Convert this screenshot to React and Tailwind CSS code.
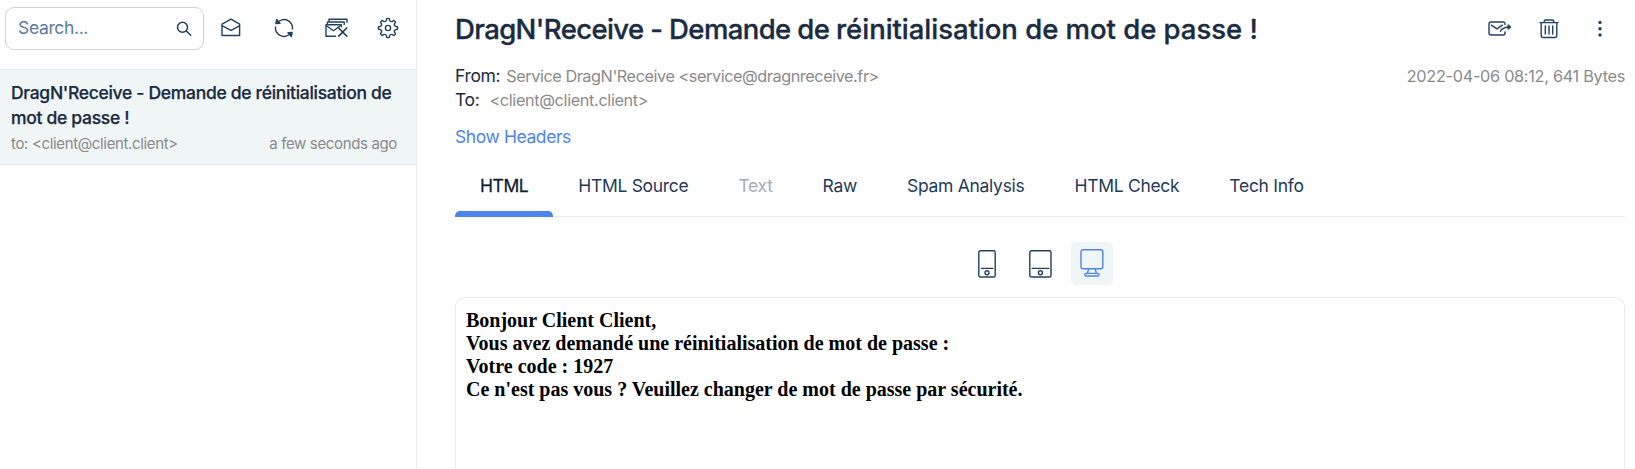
import React from "react";

const Svg = ({ w, h, className = "", children, sw = 1.3 }) => (
  <svg
    width={w}
    height={h}
    viewBox={`0 0 ${w} ${h}`}
    fill="none"
    stroke="currentColor"
    strokeWidth={sw}
    strokeLinecap="round"
    strokeLinejoin="round"
    className={"block shrink-0 " + className}
  >
    {children}
  </svg>
);

const SearchIcon = () => (
  <Svg w={16} h={16} sw={1.5}>
    <circle cx="6.5" cy="6.2" r="5" />
    <path d="M10.2 9.9 14.7 14.3" />
  </Svg>
);

const OpenMailIcon = () => (
  <Svg w={20} h={20} sw={1.4}>
    <path d="M1 6.2 10 1.2l8.6 5v11.3H1z" />
    <path d="m1.3 7.8 8.7 4.6 8.4-4.6" />
  </Svg>
);

const RefreshIcon = () => (
  <Svg w={20} h={20} sw={1.4}>
    <path d="M5.4 3A8.4 8.4 0 0 1 18.4 11" />
    <path d="M14.6 17A8.4 8.4 0 0 1 1.6 9" />
    <path d="M2.6 1.6 1.9 5.6 6 5.2zM17.4 18.4l.7-4-4.1.4z" fill="currentColor" />
  </Svg>
);

const ClearMailIcon = () => (
  <Svg w={23} h={20} sw={1.4}>
    <path d="M4 3.8V1.2h18v3M2.4 6.5V4h16.8v2.6M10.5 18.2H1V6.8h15.4v2" />
    <path d="m1.8 8 6.7 4.8 6.5-4.8" />
    <path d="m13.7 10 8 8.2M21.7 10l-8 8.2" strokeWidth="1.7" />
  </Svg>
);

const polar = (deg, r) => {
  const a = (deg * Math.PI) / 180;
  return `${(11 + r * Math.cos(a)).toFixed(2)} ${(11 + r * Math.sin(a)).toFixed(2)}`;
};

const gearPath =
  Array.from({ length: 8 }, (_, i) => {
    const a = i * 45;
    return `${i ? "L" : "M"}${polar(a - 11, 7.9)}L${polar(a - 8, 9.5)}Q${polar(a, 9.9)} ${polar(a + 8, 9.5)}L${polar(a + 11, 7.9)}Q${polar(a + 22.5, 6.3)} ${polar(a + 34, 7.9)}`;
  }).join("") + "Z";

const GearIcon = () => (
  <Svg w={22} h={22} sw={1.4}>
    <circle cx="11" cy="11" r="2.6" />
    <path d={gearPath} />
  </Svg>
);

const ForwardIcon = () => (
  <Svg w={24} h={16} sw={1.4}>
    <path d="M17 3.4V3q0-2-2-2H3Q1 1 1 3v9q0 2 2 2h12q2 0 2-2v-1" />
    <path d="m3.4 4.2 5.6 3.6 5.4-3.6" />
    <path d="M12.4 10.2C14 7.3 16 6 22 6" />
    <path d="m20.2 4 2.2 2-2.2 2z" fill="currentColor" />
  </Svg>
);

const TrashIcon = () => (
  <Svg w={20} h={20} sw={1.4}>
    <path d="M1 3.6h18M5.2 3.2V2.4q0-1.4 1.4-1.4h6.8q1.4 0 1.4 1.4v.8M2.2 3.8v12.7q0 2 2 2h11.6q2 0 2-2V3.8M6.3 7v8M10 7v8M13.7 7v8" />
  </Svg>
);

const DotsIcon = () => (
  <Svg w={6} h={18}>
    <g fill="currentColor" stroke="none">
      <circle cx="3" cy="2.4" r="1.7" />
      <circle cx="3" cy="8.8" r="1.7" />
      <circle cx="3" cy="15" r="1.7" />
    </g>
  </Svg>
);

const PhoneIcon = () => (
  <Svg w={18} h={28} sw={1.4}>
    <rect x=".8" y=".8" width="16.4" height="26.2" rx="1.6" />
    <path d="M3.4 18.4h11.4" />
    <circle cx="9" cy="22.7" r="2" />
  </Svg>
);

const TabletIcon = () => (
  <Svg w={23} h={28} sw={1.4}>
    <rect x=".8" y=".8" width="21.2" height="26.2" rx="1.6" />
    <path d="M3.2 18.4h16.6" />
    <circle cx="11.4" cy="22.7" r="2" />
  </Svg>
);

const DesktopIcon = () => (
  <Svg w={24} h={28} sw={1.4}>
    <rect x="1" y=".8" width="21.8" height="19" rx="2" />
    <path d="m8.6 20-1.2 4.4M15.2 20l1.2 4.4" />
    <rect x="4.8" y="24.4" width="14.2" height="2.6" rx="1.2" />
  </Svg>
);

const tabs = ["HTML", "HTML Source", "Text", "Raw", "Spam Analysis", "HTML Check", "Tech Info"];

function Tab({ name }) {
  const active = name === "HTML";
  const disabled = name === "Text";
  return (
    <div
      className={
        "flex flex-col justify-between px-[25px] " +
        (active
          ? "tracking-[-0.026em] text-[#101d33] "
          : disabled
            ? "text-[#a4abb5] "
            : "text-[#1f3a58] ")
      }
    >
      <span className={"leading-[22px] " + (active ? "[-webkit-text-stroke:0.3px_#101d33]" : "")}>{name}</span>
      {active && <span className="-mx-[25px] h-[6px] rounded-t-[5px] bg-[#4c83ee]" />}
    </div>
  );
}

export default function App() {
  return (
    <div className="flex h-[469px] w-[1635px] overflow-hidden bg-white font-['Inter',sans-serif] text-[17.5px] tracking-[-0.02em] text-[#1a2b42]">
      <aside className="w-[417px] shrink-0 border-r border-[#ebebeb]">
        <div className="flex h-[69px] items-start pt-[7px] pl-[5px] text-[#234060]">
          <div className="flex h-[43px] w-[199px] items-center justify-between rounded-[9px] border border-[#cfd3d8] pr-[11px] pl-[12px]">
            <span className="text-[#5b7a99]">Search...</span>
            <SearchIcon />
          </div>
          <div className="flex h-[42px] items-center pl-[17px]">
            <OpenMailIcon />
            <div className="w-[33px]" />
            <RefreshIcon />
            <div className="w-[31px]" />
            <ClearMailIcon />
            <div className="w-[29px]" />
            <GearIcon />
          </div>
        </div>
        <div className="h-[96px] border-y border-[#e6eaea] bg-[#f0f6f6] pt-[10px] pr-[19px] pl-[11px]">
          <div className="w-[400px] leading-[25px] font-medium tracking-[-0.0175em] [-webkit-text-stroke:0.25px_#1a2b42]">
            DragN'Receive - Demande de réinitialisation de
            <br />
            mot de passe !
          </div>
          <div className="flex justify-between pt-[4px] text-[15px] leading-[20px] text-[#8a8a8a]">
            <span>to: &lt;client@client.client&gt;</span>
            <span>a few seconds ago</span>
          </div>
        </div>
      </aside>

      <main className="flex w-[1208px] shrink-0 flex-col pl-[38px]">
        <div className="flex h-[58px] items-center justify-between">
          <h1 className="text-[27.5px] leading-[34px] font-medium tracking-[-0.022em] [-webkit-text-stroke:0.35px_#1a2b42]">
            DragN'Receive - Demande de{" "}
            <span className="tracking-[-0.001em]">réinitialisation de mot de passe !</span>
          </h1>
          <div className="flex items-center pr-[22px] text-[#234060]">
            <ForwardIcon />
            <div className="w-[27px]" />
            <TrashIcon />
            <div className="w-[38px]" />
            <DotsIcon />
          </div>
        </div>
        <div className="flex justify-between pt-[6px]">
          <div>
            <div className="flex h-6 items-center gap-[6px]">
              <span>From:</span>
              <span className="text-[16.25px] tracking-[-0.027em] text-[#8a8a8a]">
                Service DragN'Receive &lt;service@dragnreceive.fr&gt;
              </span>
            </div>
            <div className="flex h-6 items-center gap-[10px]">
              <span>To:</span>
              <span className="text-[16.25px] text-[#8a8a8a]">&lt;client@client.client&gt;</span>
            </div>
          </div>
          <span className="h-6 text-[16.25px] leading-6 tracking-[-0.0175em] text-[#8a8a8a]">
            2022-04-06 08:12, 641 Bytes
          </span>
        </div>
        <div className="mt-[13px] h-6 leading-6 tracking-[-0.024em] text-[#4c83ee]">Show Headers</div>
        <div className="mt-[26px] flex h-[42px] shrink-0 border-b border-[#ebebeb] tracking-[-0.017em] [&>div:first-child]:-mb-px">
          {tabs.map((t) => (
            <Tab key={t} name={t} />
          ))}
        </div>
        <div className="mt-[25px] flex h-[43px] shrink-0 items-center pl-[523px] text-[#234060]">
          <PhoneIcon className="mb-px" />
          <div className="w-[33px]" />
          <TabletIcon className="mb-px" />
          <div className="ml-[19px] flex h-[43px] w-[42px] items-center justify-center rounded-[5px] bg-[#f0f6f6] pb-px text-[#4c83ee]">
            <DesktopIcon />
          </div>
        </div>
        <div className="mt-[12px] w-[1170px] grow rounded-t-[10px] border border-b-0 border-[#ebebeb] pt-[11px] pl-[10px] font-['Liberation_Serif',serif] text-[20px] leading-[23px] font-bold tracking-normal text-black">
          <p>Bonjour Client Client,</p>
          <p>Vous avez demandé une réinitialisation de mot de passe :</p>
          <p>Votre code : 1927</p>
          <p>Ce n'est pas vous ? Veuillez changer de mot de passe par sécurité.</p>
        </div>
      </main>
    </div>
  );
}
